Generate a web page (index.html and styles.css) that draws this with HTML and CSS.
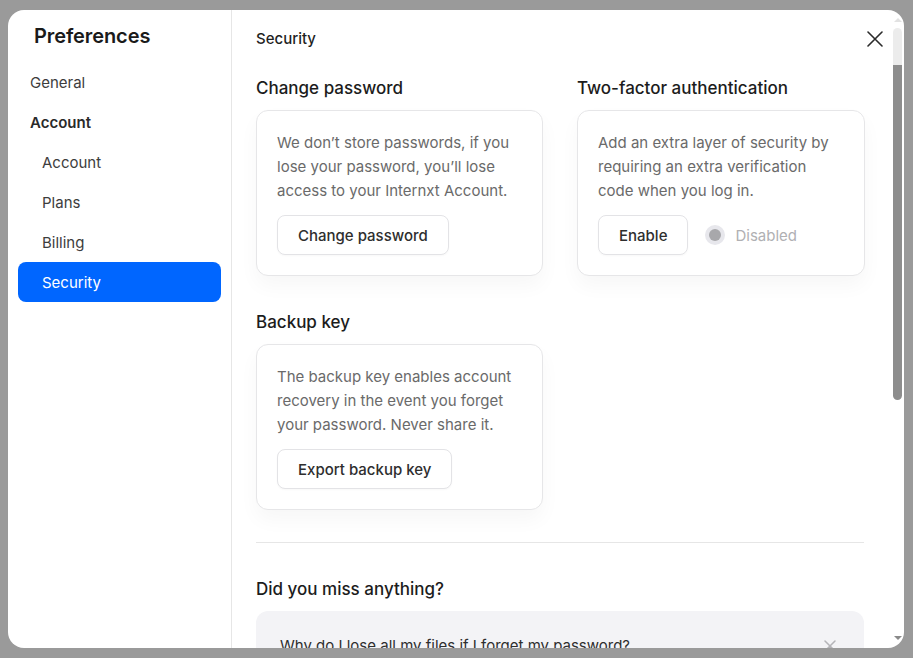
FILE: index.html
```html
<!DOCTYPE html>
<html lang="en">
<head>
<meta charset="utf-8">
<title>Preferences</title>
<link rel="stylesheet" href="styles.css">
</head>
<body>
<div class="modal">
  <aside class="sidebar">
    <h1 class="title">Preferences</h1>
    <nav class="nav">
      <div class="nav-item">General</div>
      <div class="nav-item nav-group">Account</div>
      <div class="nav-item nav-sub">Account</div>
      <div class="nav-item nav-sub">Plans</div>
      <div class="nav-item nav-sub">Billing</div>
      <div class="nav-item nav-sub active">Security</div>
    </nav>
  </aside>
  <main class="main">
    <div class="content">
      <header class="header">
        <span class="header-title">Security</span>
        <span class="close" aria-label="Close">
          <svg width="16" height="16" viewBox="0 0 16 16"><path d="M1 1L15 15M15 1L1 15" stroke="#2b2b2b" stroke-width="1.6" stroke-linecap="round" fill="none"/></svg>
        </span>
      </header>
      <div class="grid">
        <section class="section">
          <h2 class="section-title">Change password</h2>
          <div class="card">
            <p class="card-text">We don’t store passwords, if you lose your password, you’ll lose access to your Internxt Account.</p>
            <div class="card-actions"><button class="btn">Change password</button></div>
          </div>
        </section>
        <section class="section">
          <h2 class="section-title">Two-factor authentication</h2>
          <div class="card">
            <p class="card-text">Add an extra layer of security by requiring an extra verification code when you log in.</p>
            <div class="card-actions">
              <button class="btn">Enable</button>
              <span class="status-dot"><span class="status-inner"></span></span>
              <span class="status-text">Disabled</span>
            </div>
          </div>
        </section>
        <section class="section">
          <h2 class="section-title">Backup key</h2>
          <div class="card">
            <p class="card-text">The backup key enables account recovery in the event you forget your password. Never share it.</p>
            <div class="card-actions"><button class="btn">Export backup key</button></div>
          </div>
        </section>
      </div>
      <hr class="divider">
      <section class="faq">
        <h2 class="section-title">Did you miss anything?</h2>
        <div class="faq-item">
          <span class="faq-q">Why do I lose all my files if I forget my password?</span>
          <svg class="faq-x" width="12" height="12" viewBox="0 0 12 12"><path d="M1 1L11 11M11 1L1 11" stroke="#b4b4b8" stroke-width="1.5" stroke-linecap="round" fill="none"/></svg>
        </div>
      </section>
    </div>
    <div class="scrollbar">
      <div class="sb-up"></div>
      <div class="sb-track-top"></div>
      <div class="sb-thumb"></div>
      <div class="sb-fill"></div>
      <div class="sb-down"></div>
    </div>
  </main>
</div>
</body>
</html>
```

FILE: styles.css
```css
* { box-sizing: border-box; }
html, body { margin: 0; height: 100%; }
body {
  background: #9a9a9a;
  padding: 10px 9px 10px 8px;
  font-family: Inter, "Noto Sans", sans-serif;
  color: #1f1f1f;
  overflow: hidden;
}
.modal {
  height: 638px;
  background: #fff;
  border-radius: 16px;
  display: flex;
  overflow: hidden;
}
.sidebar {
  width: 224px;
  flex: none;
  border-right: 1px solid #e6e6e6;
  padding: 13px 10px 0;
}
.title {
  margin: 0 0 13px 16px;
  font-size: 20px;
  font-weight: 600;
  line-height: 26px;
  color: #1a1a1a;
  letter-spacing: -0.1px;
}
.nav { display: flex; flex-direction: column; }
.nav-item {
  height: 40px;
  display: flex;
  align-items: center;
  padding-left: 12px;
  font-size: 15px;
  color: #3d3d3d;
  border-radius: 8px;
}
.nav-group { font-weight: 600; color: #2a2a2a; }
.nav-sub { padding-left: 24px; }
.nav-item.active { background: #0066ff; color: #fff; }

.main { flex: 1; display: flex; min-width: 0; }
.content {
  flex: 1;
  overflow: hidden;
  padding: 18px 27px 0 24px;
}
.header {
  display: flex;
  justify-content: space-between;
  align-items: center;
  height: 20px;
  margin-right: -19px;
}
.header-title { font-size: 15px; font-weight: 500; color: #1f1f1f; }
.close { display: flex; width: 16px; height: 16px; margin-top: 1px; }

.grid {
  display: grid;
  grid-template-columns: 287px 288px;
  column-gap: 34px;
  row-gap: 35px;
  margin-top: 29px;
}
.section { display: flex; flex-direction: column; gap: 11px; }
.section-title {
  margin: 0;
  font-size: 17px;
  font-weight: 500;
  line-height: 22px;
  color: #1c1c1c;
}
.card {
  border: 1px solid #e6e6e8;
  border-radius: 12px;
  padding: 20px 20px 20px;
  box-shadow: 0 10px 20px rgba(0, 0, 0, 0.035);
  background: #fff;
}
.card-text {
  margin: 0;
  font-size: 15px;
  line-height: 24px;
  color: #6a6a6a;
}
.card-actions { display: flex; align-items: center; margin-top: 12px; }
.btn {
  height: 40px;
  padding: 0 20px;
  border: 1px solid #e3e3e6;
  border-radius: 8px;
  background: #fff;
  font-family: inherit;
  font-size: 15px;
  font-weight: 500;
  color: #2e2e2e;
  box-shadow: 0 1px 2px rgba(0,0,0,0.03);
}
.status-dot {
  width: 20px;
  height: 20px;
  border-radius: 50%;
  background: #e7e7ec;
  display: flex;
  align-items: center;
  justify-content: center;
  margin-left: 17px;
}
.status-inner { width: 12px; height: 12px; border-radius: 50%; background: #a8a8ab; }
.status-text { margin-left: 10px; font-size: 15px; color: #b0b0b3; }

.divider {
  border: 0;
  border-top: 1px solid #e6e6e6;
  margin: 32px 0 0;
}
.faq { display: flex; flex-direction: column; gap: 11px; margin-top: 35px; }
.faq-item {
  background: #f3f3f6;
  border-radius: 12px;
  padding: 24px 28px 24px 24px;
  display: flex;
  justify-content: space-between;
  align-items: center;
  font-size: 15px;
  line-height: 22px;
  color: #2e2e2e;
}
.faq-x { flex: none; }

.scrollbar {
  width: 13px;
  flex: none;
  display: flex;
  flex-direction: column;
  align-items: center;
  padding: 8px 0 5px;
}
.sb-up {
  width: 0; height: 0;
  border-left: 4px solid transparent;
  border-right: 4px solid transparent;
  border-bottom: 4px solid #e2e2e2;
}
.sb-track-top {
  width: 9px;
  height: 37px;
  margin-top: 6px;
  background: #ececec;
  border-radius: 5px 5px 0 0;
}
.sb-thumb {
  width: 9px;
  height: 335px;
  background: #8d8d8d;
  border-radius: 0 0 5px 5px;
}
.sb-fill { flex: 1; }
.sb-down {
  width: 0; height: 0;
  border-left: 4px solid transparent;
  border-right: 4px solid transparent;
  border-top: 4px solid #8a8a8a;
  margin-bottom: 3px;
}
```
